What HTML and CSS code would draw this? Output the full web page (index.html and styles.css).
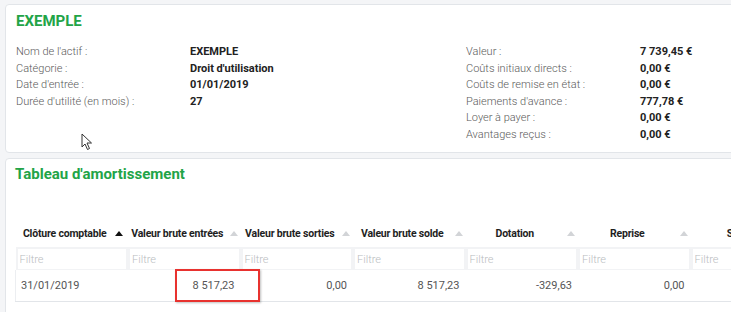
FILE: index.html
```html
<!DOCTYPE html>
<html lang="fr">
<head>
  <meta charset="UTF-8" />
  <title>Exemple</title>
  <link rel="stylesheet" href="styles.css">
</head>
<body>
  <section class="card info-card">
    <h2 class="card-title">EXEMPLE</h2>
    <div class="info-grid">
      <div class="info-col">
        <div class="row"><span class="lbl">Nom de l'actif :</span><span class="val">EXEMPLE</span></div>
        <div class="row"><span class="lbl">Catégorie :</span><span class="val">Droit d'utilisation</span></div>
        <div class="row"><span class="lbl">Date d'entrée :</span><span class="val">01/01/2019</span></div>
        <div class="row"><span class="lbl">Durée d'utilité (en mois) :</span><span class="val">27</span></div>
      </div>
      <div class="info-col">
        <div class="row"><span class="lbl">Valeur :</span><span class="val">7 739,45 €</span></div>
        <div class="row"><span class="lbl">Coûts initiaux directs :</span><span class="val">0,00 €</span></div>
        <div class="row"><span class="lbl">Coûts de remise en état :</span><span class="val">0,00 €</span></div>
        <div class="row"><span class="lbl">Paiements d'avance :</span><span class="val">777,78 €</span></div>
        <div class="row"><span class="lbl">Loyer à payer :</span><span class="val">0,00 €</span></div>
        <div class="row"><span class="lbl">Avantages reçus :</span><span class="val">0,00 €</span></div>
      </div>
    </div>
    <svg class="cursor" width="12" height="18" viewBox="0 0 12 18">
      <path d="M1 1 L1 14 L4 11 L6.5 16.5 L8.5 15.5 L6 10 L10.5 10 Z" fill="#fff" stroke="#333" stroke-width="1" stroke-linejoin="round"/>
    </svg>
  </section>

  <section class="card table-card">
    <h2 class="card-title">Tableau d'amortissement</h2>
    <table class="grid">
      <thead>
        <tr class="head">
          <th>Clôture comptable<i class="sort active"></i></th>
          <th>Valeur brute entrées<i class="sort"></i></th>
          <th>Valeur brute sorties<i class="sort"></i></th>
          <th>Valeur brute solde<i class="sort"></i></th>
          <th>Dotation<i class="sort"></i></th>
          <th>Reprise<i class="sort"></i></th>
          <th>Solde<i class="sort"></i></th>
        </tr>
        <tr class="filters">
          <td><input type="text" placeholder="Filtre"></td>
          <td><input type="text" placeholder="Filtre"></td>
          <td><input type="text" placeholder="Filtre"></td>
          <td><input type="text" placeholder="Filtre"></td>
          <td><input type="text" placeholder="Filtre"></td>
          <td><input type="text" placeholder="Filtre"></td>
          <td><input type="text" placeholder="Filtre"></td>
        </tr>
      </thead>
      <tbody>
        <tr class="data">
          <td class="left">31/01/2019</td>
          <td class="hl">8 517,23<span class="mark"></span></td>
          <td>0,00</td>
          <td>8 517,23</td>
          <td>-329,63</td>
          <td>0,00</td>
          <td>-329,63</td>
        </tr>
      </tbody>
    </table>
  </section>
</body>
</html>
```

FILE: styles.css
```css
:root {
  --page: #f4f5f7;
  --line: #e2e5e9;
  --green: #22a447;
  --text: #222;
  --muted: #5a5a5a;
}
body {
  margin: 0; padding: 4px 0 0 5px;
  background: var(--page);
  font-family: Roboto, "Liberation Sans", sans-serif;
  color: var(--text);
  overflow: hidden;
  width: 726px; height: 308px;
}
.card {
  position: relative;
  width: 820px;
  background: #fff;
  border: 1px solid var(--line);
  border-radius: 4px;
  box-sizing: border-box;
}
.card-title {
  margin: 0; color: var(--green);
  font-weight: 700; line-height: 20px;
}
.info-card {
  height: 149px;
  padding: 6px 10px 0;
}
.info-card .card-title { font-size: 15px; }
.info-grid {
  display: flex; margin-top: 13px;
}
.info-col {
  flex: none; width: 450px;
}
.info-col + .info-col { width: 300px; }
.row {
  display: flex; font-size: 11px; line-height: 16.6px;
}
.lbl {
  flex: none; width: 174px; font-weight: 300; color: var(--muted);
}
.val { font-weight: 700; color: var(--text); }
.cursor {
  position: absolute; left: 75px; top: 128px;
}

.table-card {
  margin-top: 5px;
  height: 160px;
  padding: 5px 10px 0 9px;
}
.table-card .card-title { font-size: 15px; }
.grid {
  margin-top: 35px;
  border-collapse: collapse;
  table-layout: fixed;
  width: 787px;
  font-size: 11px;
}
.grid th, .grid td {
  width: 112.5px; padding: 0;
  box-sizing: border-box;
}
.head th {
  position: relative;
  height: 28px;
  padding-right: 14px;
  font-weight: 700; font-size: 10.5px;
  color: #1e1e1e; text-align: center;
  letter-spacing: -0.2px;
  white-space: nowrap;
}
.sort {
  position: absolute; right: 3px; top: 12px;
  width: 0; height: 0;
  border-left: 4px solid transparent;
  border-right: 4px solid transparent;
  border-bottom: 5px solid #d2d4d7;
}
.sort.active { border-bottom-color: #111; right: 5px; }
.filters td {
  background: #f2f3f5;
  padding: 2px 2px 1px;
  height: 23px;
}
.filters input {
  display: block; box-sizing: border-box;
  width: 100%; height: 20px;
  border: none; outline: none;
  background: #fff; padding: 0 2px;
  font: 300 11px Roboto, sans-serif;
}
.filters input::placeholder { color: #b9bcc0; }
.data td {
  height: 31px;
  border-bottom: 1px solid var(--line);
  text-align: right; padding-right: 6px;
  color: #555; font-weight: 400;
}
.data td.left {
  text-align: left; padding-left: 5px;
  border-left: 1px solid #eceef1;
}
.data td.hl { position: relative; }
.mark {
  position: absolute; left: 47px; right: -19px; top: -1px; bottom: -1px;
  border: 2px solid #e8322f;
  box-shadow: 1px 1px 2px rgba(0,0,0,0.25);
}
```
